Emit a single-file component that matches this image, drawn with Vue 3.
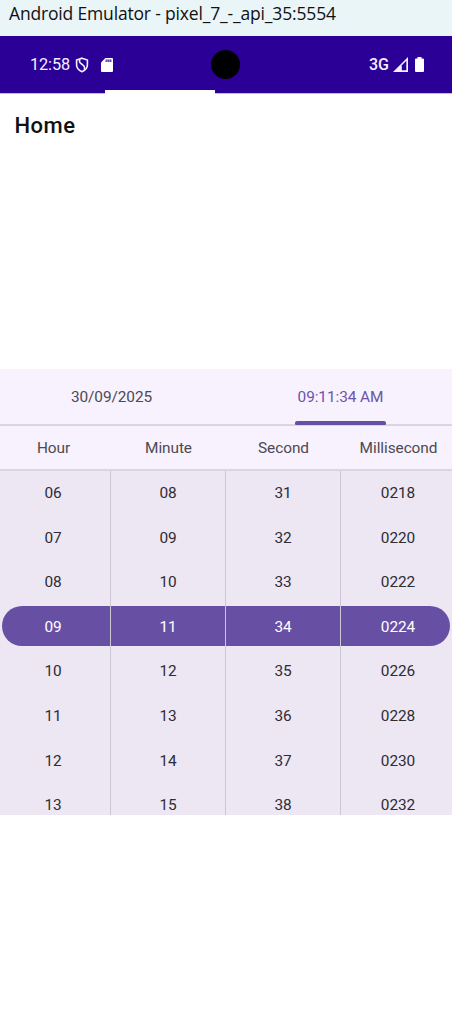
<script setup>
const columns = [
  { name: 'Hour', values: ['06', '07', '08', '09', '10', '11', '12', '13'] },
  { name: 'Minute', values: ['08', '09', '10', '11', '12', '13', '14', '15'] },
  { name: 'Second', values: ['31', '32', '33', '34', '35', '36', '37', '38'] },
  { name: 'Millisecond', values: ['0218', '0220', '0222', '0224', '0226', '0228', '0230', '0232'] },
]
const selected = 3
</script>

<template>
  <div class="window">
    <div class="titlebar"><span>Android Emulator - pixel_7_-_api_35:5554</span></div>
    <header class="status">
      <div class="left">
        <span class="clock">12:58</span>
        <svg class="shield" width="14" height="16" viewBox="0 0 14 16" fill="none" stroke="#f4f0ff" stroke-width="1.6">
          <path d="M7 1.2 12.4 3v4.7c0 3.1-2.1 5.6-5.4 7-3.3-1.4-5.4-3.9-5.4-7V3Z" />
          <path d="M4.6 2.4v2.4c0 1.9 4.9 3.1 4.9 5.4v2.6" />
        </svg>
        <svg class="card" width="12" height="14" viewBox="0 0 12 14">
          <path d="M4.4 0H11q1 0 1 1v12q0 1-1 1H1q-1 0-1-1V4.4Z" fill="#fff" />
          <path d="M4.6 1.4h6v2.6h-6Z" fill="#9a88cf" />
          <path d="M5.2 1.6v2.4M7.4 1.6v2.4M9.6 1.6v2.4" stroke="#5a3eb0" stroke-width="1" />
        </svg>
      </div>
      <div class="right">
        <span class="net">3G</span>
        <svg class="signal" width="15" height="15" viewBox="0 0 15 15">
          <path d="M0 15 15 0v15Z" fill="#f4f0ff" />
          <path d="M8.8 8.3 13.3 3.7v9.6H8.8Z" fill="#2b0097" />
        </svg>
        <svg class="battery" width="9" height="15" viewBox="0 0 9 15">
          <path d="M2.5 0h4v1.5H8q1 0 1 1V14q0 1-1 1H1q-1 0-1-1V2.5q0-1 1-1h1.5Z" fill="#fff" />
        </svg>
      </div>
      <i class="camera"></i>
      <i class="progress"></i>
    </header>
    <h1>Home</h1>
    <section class="picker">
      <nav class="tabs">
        <span class="tab">30/09/2025</span>
        <span class="tab active"><b>09:11:34 AM</b></span>
      </nav>
      <div class="grid heads">
        <span v-for="c in columns" :key="c.name">{{ c.name }}</span>
      </div>
      <div class="list">
        <i class="pill"></i>
        <div class="grid wheels">
          <div v-for="c in columns" :key="c.name" class="wheel">
            <span v-for="(v, i) in c.values" :key="v" :class="{ on: i === selected }">{{ v }}</span>
          </div>
        </div>
      </div>
    </section>
  </div>
</template>

<style>
body { background: #fff; }
</style>

<style scoped>
.window {
  width: 452px;
  height: 1025px;
  overflow: hidden;
  background: #fff;
  font-family: Roboto, sans-serif;
  font-size: 15.4px;
  letter-spacing: -0.07px;
}
.titlebar {
  height: 36px;
  background: #eaf5f8;
  color: #111;
  font: 17.5px/27px "Open Sans", "Noto Sans", sans-serif;
  padding-left: 9px;
  white-space: nowrap;
  box-sizing: border-box;
}
.titlebar span { letter-spacing: -0.17px; }
.status {
  position: relative;
  height: 58px;
  background: #2b0097;
  border-bottom: 1px solid #c5b9e3;
  box-sizing: border-box;
  display: flex;
  justify-content: space-between;
  padding: 0 28px 0 30px;
  color: #f4f0ff;
}
.left, .right { display: flex; align-items: center; height: 57px; }
.clock { font-size: 16.3px; letter-spacing: -0.1px; line-height: 20px; }
.net { font-size: 16px; font-weight: 500; letter-spacing: 0; }
.shield { margin-left: 4.5px; }
.card { margin-left: 12px; }
.signal { margin-left: 4px; }
.battery { margin-left: 7px; }
.camera {
  position: absolute;
  left: 211px;
  top: 14px;
  width: 29px;
  height: 29px;
  border-radius: 50%;
  background: #000;
}
.progress {
  position: absolute;
  left: 105px;
  top: 53.6px;
  width: 109.5px;
  height: 4.4px;
  background: #fff;
}
h1 {
  margin: 0;
  padding: 0 14.5px;
  height: 275px;
  box-sizing: border-box;
  font-size: 22px;
  font-weight: 500;
  letter-spacing: 0.5px;
  line-height: 64px;
  color: #111;
}
.picker { height: 446px; background: #f7f2fd; overflow: hidden; }
.tabs {
  display: grid;
  grid-template-columns: 223px 235px;
  height: 57px;
  box-sizing: border-box;
  border-bottom: 2px solid #dbd5e1;
  color: #4c4954;
}
.tab { height: 56px; line-height: 57px; text-align: center; }
.active { color: #6b55a6; }
.active b {
  font-weight: 400;
  display: inline-block;
  width: 91px;
  height: 56px;
  position: relative;
}
.active b::after {
  content: "";
  position: absolute;
  left: 0;
  bottom: 0.4px;
  width: 100%;
  height: 3.6px;
  background: #6750a4;
  border-radius: 2px 2px 1px 1px;
}
.grid {
  display: grid;
  grid-template-columns: repeat(4, 115px);
  margin-left: -4px;
  width: 460px;
  text-align: center;
}
.heads {
  height: 45px;
  line-height: 44px;
  border-bottom: 2px solid #dbd5e1;
  box-sizing: border-box;
  color: #4c4954;
}
.list { position: relative; height: 344px; background: #ede7f3; overflow: hidden; }
.pill {
  position: absolute;
  left: 2px;
  top: 135px;
  width: 448px;
  height: 40px;
  border-radius: 20px;
  background: #6750a4;
}
.wheels { position: relative; }
.wheel { height: 344px; border-right: 1px solid #cdc7d5; box-sizing: border-box; }
.wheel span { display: block; height: 44.6px; line-height: 44px; color: #2e2c34; }
.wheel .on { color: #fff; }
</style>
